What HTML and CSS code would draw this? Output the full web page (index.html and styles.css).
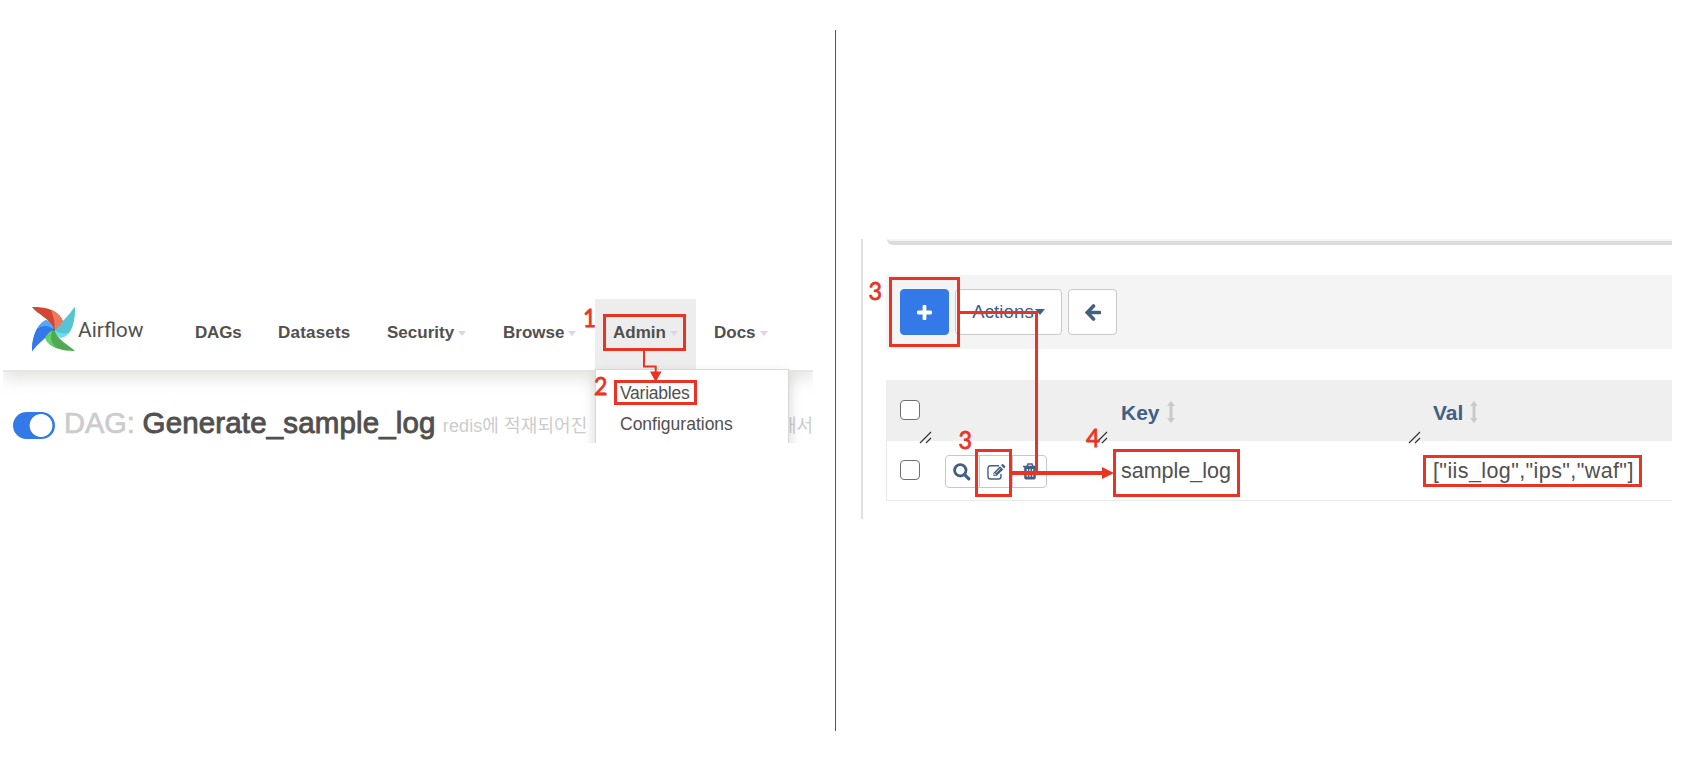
FILE: index.html
```
<!DOCTYPE html>
<html lang="ko">
<head>
<meta charset="utf-8">
<title>Airflow Variables</title>
<link rel="stylesheet" href="styles.css">
</head>
<body>
<main class="board">
  <section class="dag-shot">
    <header class="navbar">
      <svg class="logo" width="44" height="45" viewBox="0 0 44 45">
        <path d="M0 0 C13 0 25 2 31 14 C27 21 24 22 22 23 C17 10 6 8 0 0Z" fill="#d14631"/>
        <path d="M22 23 C24 16 21 10 19 3 C25 5 29 9 31 14 C28 20 25 22 22 23Z" fill="#ec785f"/>
        <path d="M43 0 C43 13 40 26 29 31 C25 29 23 25 22 23 C35 18 36 6 43 0Z" fill="#57c4d3"/>
        <path d="M31 14 C36 8 39 6 43 0 C43 12 41 21 37 26 C33 27 27 26 22 23 C26 21 29 18 31 14Z" fill="#57c4d3"/>
        <path d="M22 23 C27 26 32 27 37 26 C35 29 32 30 29 31 C25 29 23 26 22 23Z" fill="#6adfeb"/>
        <path d="M43 44 C30 44 17 41 13 31 C16 25 19 24 22 22 C26 34 37 38 43 44Z" fill="#4faa53"/>
        <path d="M22 22 C17 28 18 36 25 41 C19 39 15 35 13 31 C15 26 18 24 22 22Z" fill="#61d36a"/>
        <path d="M0 44 C0 31 4 18 14 13 C18 15 21 19 22 23 C10 26 7 38 0 44Z" fill="#3479e8"/>
        <path d="M0 44 C5 38 9 35 13 31 C15 27 18 24 22 22 C16 18 10 18 5 22 C1 29 0 37 0 44Z" fill="#3479e8"/>
        <path d="M22 23 C17 18 10 18 5 22 C7 18 10 15 14 13 C18 15 21 18 22 23Z" fill="#50aaf5"/>
        <circle cx="22" cy="22.500" r="1" fill="#51504f"/>
      </svg>
      <span class="brand">Airflow</span>
      <nav class="menu">
        <span class="item dags">DAGs</span>
        <span class="item datasets">Datasets</span>
        <span class="item security">Security<i class="caret"></i></span>
        <span class="item browse">Browse<i class="caret"></i></span>
        <span class="item admin">Admin<i class="caret"></i></span>
        <span class="item docs">Docs<i class="caret"></i></span>
      </nav>
    </header>
    <div class="dag-title">
      <span class="toggle"></span>
      <span class="prefix">DAG:</span>
      <span class="name">Generate_sample_log</span>
      <span class="desc">redis에 적재되어진</span>
      <span class="desc-end">해서</span>
    </div>
    <div class="dropdown">
      <span class="variables">Variables</span>
      <span class="config">Configurations</span>
    </div>
  </section>

  <div class="divider"></div>

  <section class="list-shot">
    <div class="panel-edge"></div>
    <div class="toolbar">
      <span class="btn add"><svg width="15" height="15" viewBox="0 0 15 15"><path d="M7.500 1.500v12M1.500 7.500h12" stroke="#fff" stroke-width="3.800" stroke-linecap="round"/></svg></span>
      <span class="btn actions">Actions<i class="caret"></i></span>
      <span class="btn back"><svg width="16" height="17" viewBox="0 0 16 17"><path d="M8.500 2L2.200 8.500L8.500 15M3 8.500H14.500" fill="none" stroke="#426084" stroke-width="3.600" stroke-linecap="round"/></svg></span>
    </div>
    <div class="table">
      <div class="row head">
        <div class="cell check"><span class="box"></span><svg class="grip" width="13" height="13" viewBox="0 0 13 13"><path d="M1 12L12 1M7 12L12 7" stroke="#333" stroke-width="1.200"/></svg></div>
        <div class="cell tools"><svg class="grip" width="13" height="13" viewBox="0 0 13 13"><path d="M1 12L12 1M7 12L12 7" stroke="#333" stroke-width="1.200"/></svg></div>
        <div class="cell key">Key<svg class="sort" width="8" height="22" viewBox="0 0 8 22"><path d="M4 0L8 5H5.500V17H8L4 22L0 17H2.500V5H0Z" fill="#c9c9c9"/></svg><svg class="grip" width="13" height="13" viewBox="0 0 13 13"><path d="M1 12L12 1M7 12L12 7" stroke="#333" stroke-width="1.200"/></svg></div>
        <div class="cell val">Val<svg class="sort" width="8" height="22" viewBox="0 0 8 22"><path d="M4 0L8 5H5.500V17H8L4 22L0 17H2.500V5H0Z" fill="#c9c9c9"/></svg></div>
      </div>
      <div class="row body">
        <div class="cell check"><span class="box"></span></div>
        <div class="cell tools">
          <div class="group">
            <span><svg width="18" height="18" viewBox="0 0 18 18"><circle cx="7.300" cy="7.300" r="5.700" fill="none" stroke="#426084" stroke-width="2.800"/><path d="M11.800 11.800L15.800 15.800" stroke="#426084" stroke-width="3.200" stroke-linecap="round"/></svg></span>
            <span><svg width="19" height="16" viewBox="0 0 19 16"><path d="M12 1.800H3.500Q1 1.800 1 4.300V12.500Q1 15 3.500 15H11.500Q14 15 14 12.500V10" fill="none" stroke="#426084" stroke-width="1.400"/><path d="M6.500 12V8.800L13 2.200L16.200 5.400L9.600 12ZM14 1.200L15 .300Q15.700 -.200 16.500 .500L18 2Q18.700 2.800 18 3.500L17.100 4.400Z" fill="#426084"/><path d="M7.700 9.200V10.800H9.200M9 8.800L13.300 4.500" fill="none" stroke="#fff" stroke-width=".8"/></svg></span>
            <span><svg width="14" height="17" viewBox="0 0 14 17"><path d="M4.200 3L5 1H9L9.800 3M0 3.500H14" fill="none" stroke="#426084" stroke-width="1.500"/><path d="M1.200 4H12.800V14.500Q12.800 16.500 11 16.500H3Q1.200 16.500 1.200 14.500Z" fill="#426084"/><path d="M4.300 6V13.800M7 6V13.800M9.700 6V13.800" stroke="#fff" stroke-width="1.100"/></svg></span>
          </div>
        </div>
        <div class="cell key">sample_log</div>
        <div class="cell val">["iis_log","ips","waf"]</div>
      </div>
    </div>
  </section>

  <svg class="notes" width="1684" height="776" viewBox="0 0 1684 776">
    <g fill="none" stroke="#ea3323" stroke-width="3">
      <rect x="604.500" y="315.500" width="80" height="34"/>
      <rect x="615.500" y="381.500" width="80" height="22"/>
      <rect x="890.500" y="278.500" width="68" height="67"/>
      <rect x="976.500" y="450.500" width="34" height="45"/>
      <rect x="1114.500" y="450.500" width="124" height="45"/>
      <rect x="1424.500" y="456.500" width="216" height="29"/>
      <path d="M960 312.500H1036.500V473"/>
      <path d="M644 351V366.500H655.700V373" stroke-width="2"/>
      <path d="M1012 473H1104" stroke-width="4"/>
    </g>
    <path d="M650 371.500H661.500L655.700 382ZM1102 467L1114 473L1102 479Z" fill="#ea3323"/>
    <g class="digits">
      <text x="583" y="327" textLength="13" lengthAdjust="spacingAndGlyphs">1</text>
      <text x="594" y="395" textLength="13.500" lengthAdjust="spacingAndGlyphs">2</text>
      <text x="868.500" y="300" textLength="13.500" lengthAdjust="spacingAndGlyphs">3</text>
      <text x="958.500" y="449" textLength="13.500" lengthAdjust="spacingAndGlyphs">3</text>
      <text x="1086" y="447" textLength="14" lengthAdjust="spacingAndGlyphs">4</text>
    </g>
  </svg>
</main>
</body>
</html>
```
FILE: styles.css
```
* { box-sizing: border-box; }
body { margin: 0; background: #fff; font-family: "Liberation Sans", Arial, "Noto Sans CJK KR", sans-serif; color: #51504f; }
.board { position: relative; display: flex; width: 1684px; height: 776px; overflow: hidden; }

.dag-shot { position: relative; width: 810px; height: 144px; margin: 299px 0 0 3px; overflow: hidden; }
.navbar { display: flex; height: 73px; padding-left: 29px; border-bottom: 2px solid #e6e6e2; box-shadow: 0 6px 16px rgba(80, 80, 70, .17); }
.logo { margin-top: 8px; flex: none; }
.brand { width: 118px; padding-left: 2px; margin-top: 19px; flex: none; font: 21px/24px Roboto, sans-serif; }
.menu { display: flex; height: 71px; font-size: 17px; font-weight: bold; line-height: 68px; }
.item { flex: none; white-space: nowrap; }
.caret { display: inline-block; border: solid transparent; border-width: 5px 4.500px 0; border-top-color: #dfd3e4; vertical-align: 2px; margin-left: 4px; }
.dags { width: 84px; padding-left: 1px; letter-spacing: -.2px; }
.datasets { width: 109px; letter-spacing: .2px; }
.security { width: 116px; }
.browse { width: 92px; }
.admin { width: 101px; padding-left: 18px; background: #ededed; }
.docs { padding-left: 18px; }

.dag-title { display: flex; height: 71px; padding-left: 10px; line-height: 44px; padding-top: 29px; white-space: nowrap; }
.toggle { width: 42px; height: 27px; margin-top: 11px; border-radius: 14px; background: radial-gradient(circle at 28px 13.500px, #fff 11px, #3479e8 11.800px); flex: none; }
.prefix { width: 79px; margin-left: 9px; font-size: 29px; color: #ccc; -webkit-text-stroke: .7px #ccc; }
.name { width: 302px; font-size: 29.500px; letter-spacing: .15px; -webkit-text-stroke: .9px #51504f; }
.desc { width: 339px; font-size: 18px; line-height: 51px; letter-spacing: .1px; color: #ccc; }
.desc-end { font-size: 18px; line-height: 51px; color: #ccc; }
.dropdown { position: absolute; left: 592px; top: 70px; width: 194px; height: 90px; display: flex; flex-direction: column; padding: 8px 0 0 24px; font-size: 17.500px; line-height: 31px; background: #fff; border: 1px solid #d8d8d8; box-shadow: 0 6px 12px rgba(0, 0, 0, .18); }
.variables { letter-spacing: -.25px; }

.divider { width: 1px; height: 701px; margin: 30px 0 0 22px; background: #555; }

.list-shot { width: 811px; height: 280px; margin: 239px 0 0 25px; padding-left: 23px; border-left: 2px solid #e0e0e0; overflow: hidden; }
.panel-edge { height: 6px; margin-left: 1px; background: #f4f4f4; border-bottom: 4px solid #dcdcdc; border-bottom-left-radius: 6px; }
.toolbar { display: flex; height: 74px; margin-top: 30px; padding: 14px; background: #f4f4f4; }
.btn { display: flex; align-items: center; justify-content: center; height: 46px; border: 1px solid #c8c8c8; border-radius: 4px; background: #fff; color: #426084; }
.add { width: 49px; background: #3479e8; border-color: #3479e8; }
.actions { width: 107px; margin-left: 6px; font-size: 18.500px; letter-spacing: .15px; }
.actions .caret { border-top-color: #426084; border-width: 6px 5.500px 0; margin-left: 1px; }
.back { width: 49px; margin-left: 6px; }

.table { margin-top: 31px; }
.row { display: grid; grid-template-columns: 47px 176px 313px 1fr; }
.head { height: 61px; background: #efefef; font-size: 21px; font-weight: bold; color: #426084; }
.body { height: 60px; border: 1px solid #e9e9e9; border-width: 0 0 1px 1px; grid-template-columns: 46px 176px 313px 1fr; font-size: 21.500px; }
.cell { position: relative; padding-left: 12px; white-space: nowrap; line-height: 65px; }
.body .cell { line-height: 61px; }
.body .val { padding-left: 11px; letter-spacing: .4px; }
.cell.val { padding-left: 11px; }
.cell.check { padding: 20px 0 0 14px; }
.body .check { padding: 19px 0 0 13px; }
.box { display: block; width: 20px; height: 20px; border: 1.500px solid #707070; border-radius: 4px; background: #fff; }
.grip { position: absolute; right: 1px; bottom: 1px; }
.sort { margin-left: 7px; vertical-align: -3px; }
.group { display: flex; width: 102px; height: 33px; margin-top: 14px; border: 1px solid #c8c8c8; border-radius: 4px; }
.group span { flex: 1; display: flex; align-items: center; justify-content: center; }
.group span + span { border-left: 1px solid #c8c8c8; }

.notes { position: absolute; left: 0; top: 0; }
.digits { font: 25px Lato, sans-serif; fill: #ea3323; stroke: #ea3323; stroke-width: .8px; }
```
